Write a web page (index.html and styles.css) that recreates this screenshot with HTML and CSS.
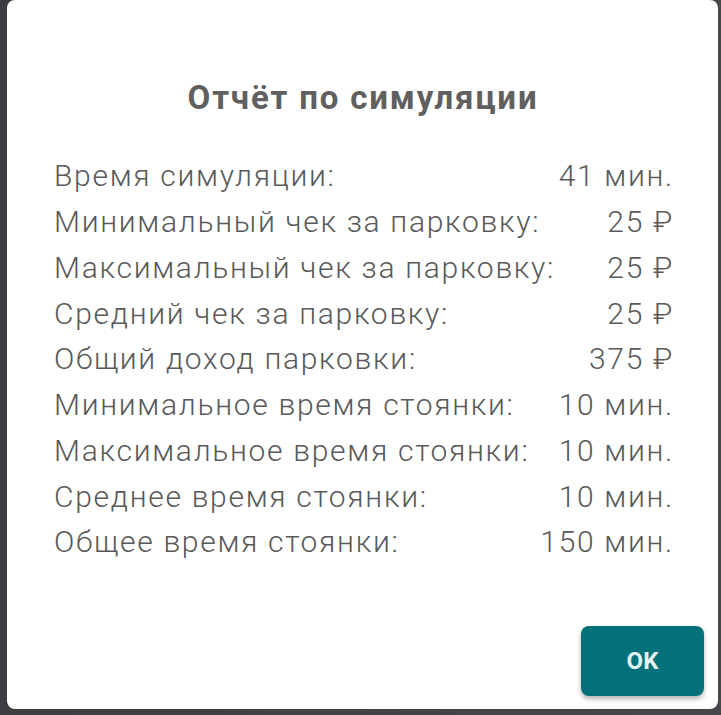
FILE: index.html
```html
<!DOCTYPE html>
<html lang="ru">
<head>
<meta charset="utf-8">
<title>Отчёт по симуляции</title>
<link rel="stylesheet" href="styles.css">
</head>
<body>
<div class="backdrop">
  <div class="dialog">
    <h2 class="title">Отчёт по симуляции</h2>
    <div class="report">
      <div class="row"><span>Время симуляции:</span><span>41 мин.</span></div>
      <div class="row"><span>Минимальный чек за парковку:</span><span>25 ₽</span></div>
      <div class="row"><span>Максимальный чек за парковку:</span><span>25 ₽</span></div>
      <div class="row"><span>Средний чек за парковку:</span><span>25 ₽</span></div>
      <div class="row"><span>Общий доход парковки:</span><span>375 ₽</span></div>
      <div class="row"><span>Минимальное время стоянки:</span><span>10 мин.</span></div>
      <div class="row"><span>Максимальное время стоянки:</span><span>10 мин.</span></div>
      <div class="row"><span>Среднее время стоянки:</span><span>10 мин.</span></div>
      <div class="row"><span>Общее время стоянки:</span><span>150 мин.</span></div>
    </div>
    <div class="actions">
      <button class="ok">OK</button>
    </div>
  </div>
</div>
</body>
</html>
```
FILE: styles.css
```css
html, body {
  margin: 0;
  padding: 0;
  height: 100%;
  background: #3f4044;
  overflow: hidden;
  font-family: Roboto, "Noto Sans", sans-serif;
}
.backdrop {
  height: 715px;
  padding-left: 7px;
  box-sizing: border-box;
  background: linear-gradient(90deg, #3d3e42, #46474b);
}
.dialog {
  width: 711px;
  height: 709px;
  background: #fff;
  border-radius: 8px;
  box-sizing: border-box;
  padding: 76px 46px 0 47px;
  display: flex;
  flex-direction: column;
}
.title {
  margin: 0;
  text-align: center;
  font-size: 33px;
  font-weight: 700;
  line-height: 44px;
  letter-spacing: 1.85px;
  color: #606060;
}
.report {
  margin-top: 33px;
  display: flex;
  flex-direction: column;
  font-size: 30px;
  font-weight: 300;
  color: #595959;
  letter-spacing: 1.7px;
  margin-right: -2px;
}
.row {
  display: flex;
  justify-content: space-between;
  align-items: center;
  height: 45.75px;
  white-space: nowrap;
}
.actions {
  margin-top: auto;
  display: flex;
  justify-content: flex-end;
  padding: 0 14px 13px 0;
  margin-right: -46px;
}
.ok {
  width: 123px;
  height: 70px;
  border: none;
  border-radius: 8px;
  background: #02717a;
  color: #e3f1f2;
  font-family: Roboto, sans-serif;
  font-size: 24px;
  font-weight: 700;
  box-shadow: 0 3px 5px rgba(0,0,0,0.3);
}
```
